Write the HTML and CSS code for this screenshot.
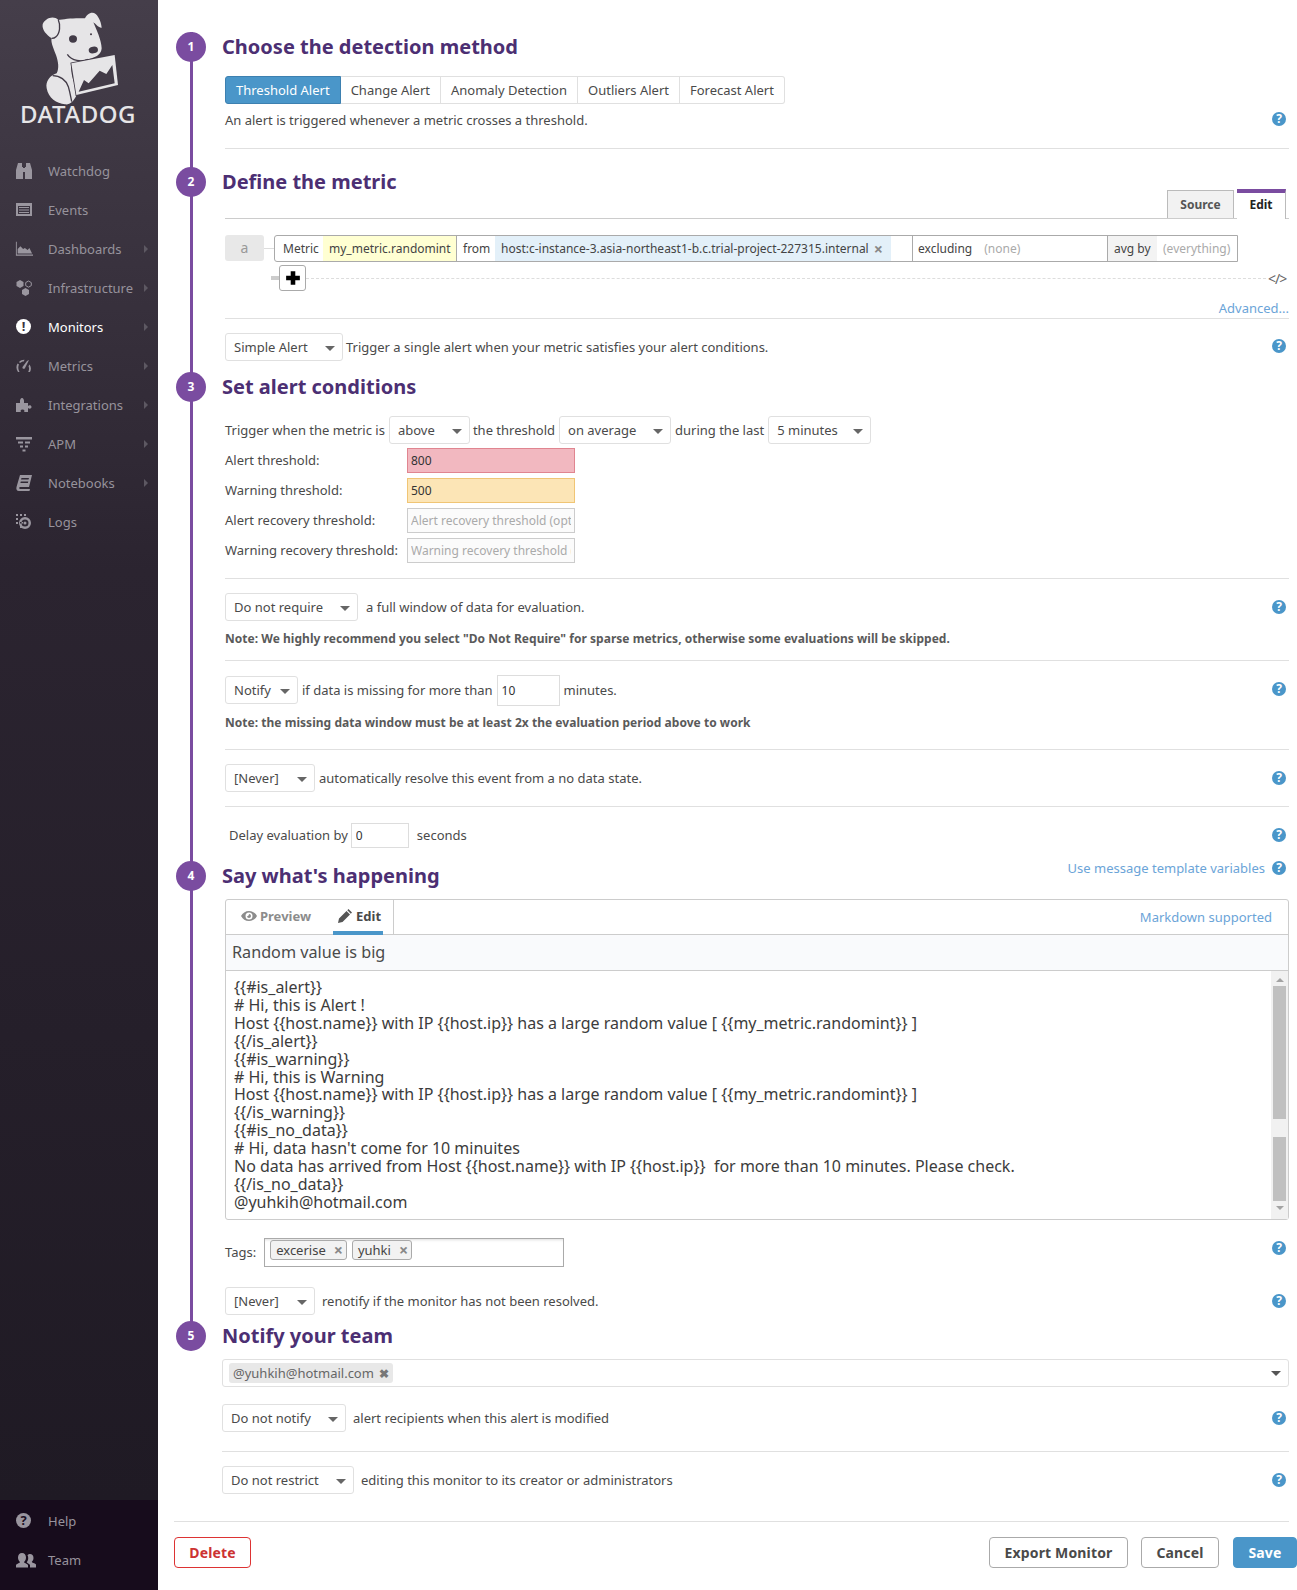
FILE: index.html
```html
<!DOCTYPE html>
<html lang="en">
<head>
    <meta charset="UTF-8">
    <title>Edit Monitor | Datadog</title>
    <link rel="stylesheet" href="styles.css">
</head>
<body>
<div class="page">
    <aside class="sidebar">
        <div class="logo">
            <svg class="logo-dog" viewBox="0 0 300 300">
                <path class="dog" d="M38 58C45 40 70 30 85 45c15-3 50-7 80-5 5-12 20-22 32-13 11 10 17 28 18 41-7 2-17-10-25-16 10 23 24 53 25 78-1 18-15 25-30 30l-61 15c-2 20 1 40 11 65l5 30c-10 20-20 30-35 28-25-3-50-18-55-48-4-22 10-38 30-45 8-15 5-35-2-55-10-25-16-40-13-50C50 90 35 75 38 58z"/>
                <path class="dog-mark" d="M85 45c7 15 5 40-7 50-5 5-10 5-13 5"/>
                <path class="dog-mark" d="M68 212c22 0 40 13 47 33 5 17 7 30 10 45"/>
                <path class="dog-mark" d="M112 148c13 20 43 24 63 15"/>
                <ellipse class="dog-eye" cx="129" cy="102" rx="12" ry="11"/>
                <ellipse class="dog-eye" cx="190" cy="135" rx="14" ry="10" transform="rotate(-10 190 135)"/>
                <circle class="dog-eye" cx="183" cy="88" r="3"/>
                <path class="dog dog-paper" d="M124 175l130-25 10 90-125 30z"/>
                <path class="dog-eye" d="M146 260l16-35 14 10 33-38 20 10 18-27 7 55z"/>
            </svg>
            <div class="logo-text">DATADOG</div>
        </div>
        <nav class="nav">
            <a class="nav-item">
                <svg class="nav-icon" viewBox="0 0 18 18"><path d="M3 1h4v4h1v12H1V8zM11 1h4l2 7v9h-7V5h1zM8 6h2v4H8z"/></svg>
                <span>Watchdog</span>
            </a>
            <a class="nav-item">
                <svg class="nav-icon" viewBox="0 0 18 18"><path fill-rule="evenodd" d="M1 2h16v13H1zM3 5v8h12V5zM4 6h10v1H4zM4 8.500h10v1H4zM4 11h10v1H4z"/></svg>
                <span>Events</span>
            </a>
            <a class="nav-item">
                <svg class="nav-icon" viewBox="0 0 20 18"><path d="M1 1h1v14h18v1.500H1zM3 14V9l3-3 3 3 2-1 3 2 2-2 3 6z"/></svg>
                <span>Dashboards</span><i class="nav-arrow"></i>
            </a>
            <a class="nav-item">
                <svg class="nav-icon" viewBox="0 0 18 18"><path d="M5 1l3.500 2v4L5 9 1.500 7V3zM10.500 9l3.500 2v4l-3.500 2L7 15v-4z"/><path class="nav-line" d="M13.500 2l2.800 1.600v3L13.500 8.200l-2.800-1.600v-3z"/></svg>
                <span>Infrastructure</span><i class="nav-arrow"></i>
            </a>
            <a class="nav-item nav-active">
                <span class="nav-alert">!</span>
                <span>Monitors</span><i class="nav-arrow"></i>
            </a>
            <a class="nav-item">
                <svg class="nav-icon" viewBox="0 0 18 18"><path d="M12 4l2-1-4 8c-.5 1.500-3 1-2.500-1zM3 15c-2-3-2-6-.5-8.500l1.500 1C3 9.500 3 12 4.500 15zM4 5c1.500-1.500 3.500-2.300 5.500-2.200L8.800 4.500C7.300 4.500 6 5.200 5 6zM14.500 7.500c1.800 2.500 1.800 5.200.5 7.500h-1.800c1-2 1.200-3.700.3-5.700z"/></svg>
                <span>Metrics</span><i class="nav-arrow"></i>
            </a>
            <a class="nav-item">
                <svg class="nav-icon" viewBox="0 0 18 18"><path d="M1 7h4V5c0-1 .5-3 2-3s2 2 2 3v2h4v3c1-1 3.500-1 3.500 1s-2.500 2-3.500 1v4H9c1-1 .5-2.500-1.500-2.500S5 15 6 16H1z"/></svg>
                <span>Integrations</span><i class="nav-arrow"></i>
            </a>
            <a class="nav-item">
                <svg class="nav-icon" viewBox="0 0 18 18"><path d="M1 2h16v2.500H1zM3 6.500h5v2H3zM10 6.500h5v2h-5zM5 10.500h3v2H5zM10 10.500h3v2h-3zM7.500 14.500h3v2h-3z"/></svg>
                <span>APM</span>
                <i class="nav-arrow"></i>
            </a>
            <a class="nav-item">
                <svg class="nav-icon" viewBox="0 0 18 18"><path d="M5 1h12l-3 12H5c-1 0-1 2 0 2h10l-.5 2H4c-2.500 0-3-2-2.500-4zM6.500 4L6 5.500h7.500L14 4zM5.800 7.500L5.400 9h7.500l.4-1.500z" fill-rule="evenodd"/></svg>
                <span>Notebooks</span><i class="nav-arrow"></i>
            </a>
            <a class="nav-item">
                <svg class="nav-icon" viewBox="0 0 18 18"><path d="M1 1h2v2H1zM5 1h2v2H5zM9 1h2v2H9zM1 5h2v2H1zM1 9h2v2H1zM5 13h2v2H5z"/><path fill-rule="evenodd" d="M10 4a6 6 0 1 1 0 12 6 6 0 0 1 0-12zm0 2.500a3.500 3.500 0 1 0 0 7 3.500 3.500 0 0 0 0-7zM10 8.500a1.500 1.500 0 1 1 0 3 1.500 1.500 0 0 1 0-3zM5 9h3v1.500H5z"/></svg>
                <span>Logs</span>
            </a>
        </nav>
        <div class="nav-bottom">
            <a class="nav-item">
                <span class="nav-help">?</span>
                <span>Help</span>
            </a>
            <a class="nav-item">
                <svg class="nav-icon nav-icon-team" viewBox="0 0 22 18"><path d="M7 2c2.500 0 4 2 4 4.500 0 2-1 3.500-2 4.500 0 1 3 1.500 4 3v2.500H1V14c1-1.500 4-2 4-3-1-1-2-2.500-2-4.500C3 4 4.500 2 7 2zM15 3c2 0 3.500 1.500 3.500 4 0 1.800-.8 3-1.700 3.800 0 1 3 1.200 4.200 2.700v3h-6v-2.500c-1-1.200-3-2-3.300-2.700 1-1.200 1.500-2.500 1.500-4.300 0-1-.2-2-.7-2.800C13.500 3.200 14.200 3 15 3z"/></svg>
                <span>Team</span>
            </a>
            <a class="nav-item">
                <svg class="nav-icon" viewBox="0 0 18 18"><circle cx="9" cy="6" r="4"/><path d="M2 17c0-4 3-6 7-6s7 2 7 6z"/></svg>
            </a>
        </div>
    </aside>

    <main class="content">
        <div class="rail">
            <!-- 1 -->
            <div class="step-head">
                <span class="step-num">1</span>
                <h2>Choose the detection method</h2>
            </div>
            <div class="step-body">
                <div class="type-tabs">
                    <span class="type-tab type-active">Threshold Alert</span>
                    <span class="type-tab">Change Alert</span>
                    <span class="type-tab">Anomaly Detection</span>
                    <span class="type-tab">Outliers Alert</span>
                    <span class="type-tab">Forecast Alert</span>
                </div>
                <div class="row row-desc">
                    <span>An alert is triggered whenever a metric crosses a threshold.</span>
                    <span class="help help-up">?</span>
                </div>
                <hr class="line line-a">
            </div>

            <!-- 2 -->
            <div class="step-head step-2">
                <span class="step-num">2</span>
                <h2>Define the metric</h2>
            </div>
            <div class="step-body">
                <div class="graph-tabs">
                    <span class="graph-tab">Source</span>
                    <span class="graph-tab graph-active">Edit</span>
                </div>
                <div class="query">
                    <span class="query-name">a</span>
                    <span class="query-link"></span>
                    <div class="query-box">
                        <span class="q q-label">Metric</span>
                        <span class="q q-metric">my_metric.randomint</span>
                        <span class="q q-from">from</span>
                        <span class="q q-host">host:c-instance-3.asia-northeast1-b.c.trial-project-227315.internal<b class="q-x">×</b></span>
                        <span class="q q-gap"></span>
                        <span class="q q-exclude">excluding<em>(none)</em></span>
                        <span class="q q-avg">avg by</span>
                        <span class="q q-every">(everything)</span>
                    </div>
                </div>
                <div class="query-add">
                    <span class="add-tick"></span>
                    <span class="add-btn">
                        <svg viewBox="0 0 14 14"><path d="M5 1h4v4h4v4H9v4H5V9H1V5h4z"/></svg>
                    </span>
                    <span class="add-dash"></span>
                    <span class="code-toggle">&lt;/&gt;</span>
                </div>
                <div class="advanced"><a class="link">Advanced...</a></div>
                <hr class="line">
                <div class="row row-simple">
                    <span class="select sel-simple">Simple Alert</span>
                    <span class="text-tight">Trigger a single alert when your metric satisfies your alert conditions.</span>
                    <span class="help help-up">?</span>
                </div>
            </div>

            <!-- 3 -->
            <div class="step-head step-3">
                <span class="step-num">3</span>
                <h2>Set alert conditions</h2>
            </div>
            <div class="step-body">
                <div class="row row-trigger">
                    <span>Trigger when the metric is</span>
                    <span class="select sel-above">above</span>
                    <span class="text-tight">the threshold</span>
                    <span class="select sel-average">on average</span>
                    <span>during the last</span>
                    <span class="select sel-minutes">5 minutes</span>
                </div>
                <div class="thresholds">
                    <label>Alert threshold:</label>
                    <input class="th-input th-alert" type="text" value="800">
                    <label>Warning threshold:</label>
                    <input class="th-input th-warn" type="text" value="500">
                    <label>Alert recovery threshold:</label>
                    <input class="th-input" type="text" placeholder="Alert recovery threshold (optional)">
                    <label>Warning recovery threshold:</label>
                    <input class="th-input" type="text" placeholder="Warning recovery threshold (optional)">
                </div>
                <hr class="line line-b">
                <div class="row row-window">
                    <span class="select sel-require">Do not require</span>
                    <span class="text-window">a full window of data for evaluation.</span>
                    <span class="help">?</span>
                </div>
                <div class="note">Note: We highly recommend you select "Do Not Require" for sparse metrics, otherwise some evaluations will be skipped.</div>
                <hr class="line line-c">
                <div class="row row-missing">
                    <span class="select sel-notify">Notify</span>
                    <span>if data is missing for more than</span>
                    <input class="small-input small-ten" type="text" value="10">
                    <span>minutes.</span>
                    <span class="help help-up">?</span>
                </div>
                <div class="note note-2">Note: the missing data window must be at least 2x the evaluation period above to work</div>
                <hr class="line line-d">
                <div class="row row-never">
                    <span class="select sel-never">[Never]</span>
                    <span>automatically resolve this event from a no data state.</span>
                    <span class="help">?</span>
                </div>
                <hr class="line line-e">
                <div class="row row-delay">
                    <span>Delay evaluation by</span>
                    <input class="small-input small-zero" type="text" value="0">
                    <span class="text-seconds">seconds</span>
                    <span class="help">?</span>
                </div>
            </div>

            <!-- 4 -->
            <div class="step-head step-4">
                <span class="step-num">4</span>
                <h2>Say what's happening</h2>
                <span class="head-right"><a class="link">Use message template variables</a><span class="help">?</span></span>
            </div>
            <div class="step-body">
                <div class="editor">
                    <div class="editor-tabs">
                        <span class="ed-tab">
                            <svg viewBox="0 0 16 12"><path fill-rule="evenodd" d="M8 1c3.500 0 6.500 2 8 5-1.500 3-4.500 5-8 5S1.500 9 0 6c1.500-3 4.500-5 8-5zm0 1.500a3.500 3.500 0 1 0 0 7 3.500 3.500 0 0 0 0-7zM8 4a2 2 0 1 1-2 2c.8.500 2-.5 2-2z"/></svg>
                            Preview
                        </span>
                        <span class="ed-tab ed-active">
                            <svg viewBox="0 0 14 14"><path d="M10.500 0L14 3.500 12.800 4.700 9.300 1.200zM8.500 2l3.500 3.500L4.500 13 0 14l1-4.500z"/></svg>
                            Edit
                        </span>
                        <a class="link md-link">Markdown supported</a>
                    </div>
                    <div class="subject">Random value is big</div>
                    <div class="message">
                        <pre class="message-text">{{#is_alert}}
# Hi, this is Alert !
Host {{host.name}} with IP {{host.ip}} has a large random value [ {{my_metric.randomint}} ]
{{/is_alert}}
{{#is_warning}}
# Hi, this is Warning
Host {{host.name}} with IP {{host.ip}} has a large random value [ {{my_metric.randomint}} ]
{{/is_warning}}
{{#is_no_data}}
# Hi, data hasn't come for 10 minuites
No data has arrived from Host {{host.name}} with IP {{host.ip}}  for more than 10 minutes. Please check.
{{/is_no_data}}
@yuhkih@hotmail.com</pre>
                        <div class="scrollbar">
                            <i class="sb-up"></i>
                            <span class="sb-thumb sb-thumb-a"></span>
                            <span class="sb-thumb sb-thumb-b"></span>
                            <i class="sb-down"></i>
                        </div>
                    </div>
                </div>
                <div class="row row-tags">
                    <span class="tags-label">Tags:</span>
                    <div class="tag-box">
                        <span class="tag">excerise<b>×</b></span>
                        <span class="tag">yuhki<b>×</b></span>
                    </div>
                    <span class="help help-tags">?</span>
                </div>
                <div class="row row-renotify">
                    <span class="select sel-renotify">[Never]</span>
                    <span class="text-wide">renotify if the monitor has not been resolved.</span>
                    <span class="help">?</span>
                </div>
            </div>
        </div>

        <!-- 5 -->
        <div class="step-head step-5">
            <span class="step-num">5</span>
            <h2>Notify your team</h2>
        </div>
        <div class="step-body step-body-last">
            <div class="recipients">
                <span class="recipient">@yuhkih@hotmail.com<b>✖</b></span>
                <i class="caret-dark"></i>
            </div>
            <div class="row row-modified">
                <span class="select sel-modified">Do not notify</span>
                <span class="text-wide">alert recipients when this alert is modified</span>
                <span class="help">?</span>
            </div>
            <hr class="line line-f">
            <div class="row row-restrict">
                <span class="select sel-restrict">Do not restrict</span>
                <span class="text-wide">editing this monitor to its creator or administrators</span>
                <span class="help">?</span>
            </div>
        </div>

        <hr class="line line-foot">
        <div class="actions">
            <button class="btn btn-delete">Delete</button>
            <span class="actions-gap"></span>
            <button class="btn btn-export">Export Monitor</button>
            <button class="btn btn-cancel">Cancel</button>
            <button class="btn btn-save">Save</button>
        </div>
    </main>
</div>
</body>
</html>
```

FILE: styles.css
```css
* {
    box-sizing: border-box;
}
html, body {
    margin: 0;
    padding: 0;
    background: #fff;
}
body {
    font-family: "Noto Sans", "Open Sans", sans-serif;
    font-size: 13px;
    color: #4a4a4a;
    overflow: hidden;
}
.page {
    display: flex;
    width: 1297px;
    height: 1590px;
    overflow: hidden;
}

/* sidebar */
.sidebar {
    width: 158px;
    flex: none;
    display: flex;
    flex-direction: column;
    background: linear-gradient(to bottom, #453e4a 0, #2b2430 570px, #1f1a24 1500px);
    color: #97939c;
}
.logo {
    height: 151px;
}
.logo-dog {
    display: block;
    width: 100px;
    height: 100px;
    margin: 5px 0 0 30px;
}
.dog {
    fill: #e6e5e7;
}
.dog-paper {
    stroke: #423b47;
    stroke-width: 5;
    paint-order: stroke;
}
.dog-eye {
    fill: #423b47;
}
.dog-mark {
    fill: none;
    stroke: #423b47;
    stroke-width: 4;
}
.logo-text {
    margin-top: -3px;
    padding-left: 20px;
    font-size: 24px;
    font-weight: 500;
    line-height: 24px;
    color: #e6e5e7;
    letter-spacing: 0.5px;
}
.nav-item {
    display: flex;
    align-items: center;
    height: 39px;
    padding-left: 15px;
    position: relative;
}
.nav-icon {
    width: 18px;
    height: 18px;
    margin-right: 15px;
    fill: #9a969f;
    flex: none;
}
.nav-icon-team {
    width: 22px;
    margin-right: 11px;
}
.nav-line {
    fill: none;
    stroke: #9a969f;
    stroke-width: 1;
}
.nav-arrow {
    position: absolute;
    left: 144px;
    top: 16px;
    border-left: 4px solid #5d5862;
    border-top: 4px solid transparent;
    border-bottom: 4px solid transparent;
}
.nav-active {
    color: #fff;
}
.nav-alert, .nav-help {
    width: 15px;
    height: 15px;
    margin: 0 17px 0 1px;
    border-radius: 50%;
    background: #fff;
    color: #3a3340;
    font-size: 13px;
    font-weight: 700;
    line-height: 15px;
    text-align: center;
    flex: none;
}
.nav-help {
    background: #9a969f;
    color: #1a0f1f;
}
.nav-bottom {
    margin-top: auto;
    height: 90px;
    padding-top: 1px;
    background: #170c1c;
    overflow: hidden;
}

/* main column */
.content {
    flex: 1;
    min-width: 0;
    padding: 32px 8px 0 16px;
}
.rail {
    position: relative;
}
.rail::before {
    content: "";
    position: absolute;
    left: 16px;
    top: 0;
    bottom: -8px;
    width: 3px;
    background: #7a4ca0;
}
.step-head {
    display: flex;
    align-items: center;
    height: 30px;
    position: relative;
}
.step-num {
    width: 30px;
    height: 30px;
    margin: 0 16px 0 2px;
    border-radius: 50%;
    background: #7a4ca0;
    color: #fff;
    font-size: 12px;
    font-weight: 700;
    line-height: 30px;
    text-align: center;
    flex: none;
}
h2 {
    margin: 0;
    padding-bottom: 2px;
    font-size: 20px;
    font-weight: 700;
    color: #4c2f73;
}
.step-2 {
    margin-top: 18px;
}
.step-3 {
    margin-top: 11px;
}
.step-4 {
    margin-top: 12px;
}
.step-5 {
    margin-top: 6px;
}
.step-body {
    padding-left: 51px;
}
.step-body-last {
    padding-left: 48px;
}
.head-right {
    margin-left: auto;
    display: flex;
    align-items: center;
    gap: 7px;
    margin-top: -16px;
}
.line {
    border: 0;
    height: 1px;
    margin: 0;
    background: #e0e0e0;
}
.line-a {
    margin-top: 18px;
}
.line-b {
    margin-top: 15px;
}
.line-c {
    margin-top: 12px;
}
.line-d {
    margin-top: 17px;
}
.line-e {
    margin-top: 14px;
}
.line-f {
    margin-top: 19px;
}
.line-foot {
    margin-top: 27px;
}
.link {
    color: #6ba4d8;
}
.row {
    display: flex;
    align-items: center;
    gap: 4px;
    height: 28px;
}
.help {
    width: 14px;
    height: 14px;
    margin-left: auto;
    margin-right: 3px;
    border-radius: 50%;
    background: #4a96c9;
    color: #fff;
    font-size: 12px;
    font-weight: 700;
    line-height: 14px;
    text-align: center;
    flex: none;
}
.help-up {
    margin-top: -2px;
}
.help-tags {
    margin-top: -10px;
}
.head-right .help {
    margin-left: 0;
}

/* detection method */
.type-tabs {
    display: flex;
    height: 28px;
    margin-top: 14px;
}
.type-tab {
    display: flex;
    align-items: center;
    justify-content: center;
    padding: 0 10px;
    border: 1px solid #e0e0e0;
    border-left: 0;
    color: #4a4a4a;
}
.type-tab:last-child {
    border-radius: 0 3px 3px 0;
}
.type-active {
    color: #fff;
    background: #4a96c9;
    border: 1px solid #3d80b0;
    border-radius: 3px 0 0 3px;
}
.row-desc {
    height: 20px;
    margin-top: 6px;
}

/* metric */
.graph-tabs {
    display: flex;
    justify-content: flex-end;
    gap: 3px;
    height: 30px;
    margin-top: -8px;
    padding-right: 3px;
    border-bottom: 1px solid #ccc;
}
.graph-tab {
    display: flex;
    align-items: center;
    justify-content: center;
    width: 67px;
    height: 28px;
    margin-top: 1px;
    background: #f2f2f2;
    border: 1px solid #bbb;
    border-bottom: 0;
    font-size: 12px;
    font-weight: 700;
    color: #555;
}
.graph-active {
    width: 49px;
    height: 30px;
    margin-top: 0;
    padding-bottom: 3px;
    background: #fff;
    border-top: 4px solid #7a4ca0;
    border-left: 0;
    color: #222;
}
.query {
    display: flex;
    align-items: flex-start;
    margin-top: 16px;
    font-size: 12px;
}
.query-name {
    width: 39px;
    height: 26px;
    background: #e8e8e8;
    border-radius: 3px;
    color: #999;
    font-size: 14px;
    line-height: 26px;
    text-align: center;
}
.query-link {
    width: 10px;
    height: 1px;
    margin-top: 13px;
    background: #ddd;
}
.query-box {
    display: flex;
    width: 964px;
    height: 27px;
    border: 1px solid #aaa;
    border-radius: 3px 0 0 3px;
}
.q {
    display: flex;
    align-items: center;
    white-space: nowrap;
    color: #444;
}
.q-label {
    width: 48px;
    padding-left: 8px;
}
.q-metric {
    width: 134px;
    padding-left: 6px;
    background: #ffffd2;
    border-right: 1px solid #aaa;
}
.q-from {
    width: 38px;
    padding-left: 6px;
}
.q-host {
    width: 396px;
    padding-left: 6px;
    background: #e3f0f9;
    overflow: hidden;
}
.q-x {
    margin-left: 5px;
    font-size: 16px;
    font-weight: 700;
    color: #888;
}
.q-gap {
    width: 22px;
    border-right: 1px solid #aaa;
}
.q-exclude {
    width: 195px;
    padding-left: 5px;
    border-right: 1px solid #aaa;
}
.q-exclude em {
    margin-left: 12px;
    font-style: normal;
    color: #aaa;
}
.q-avg {
    width: 49px;
    padding-left: 6px;
    background: #f3f3f3;
}
.q-every {
    flex: 1;
    padding-left: 6px;
    color: #aaa;
}
.query-add {
    display: flex;
    align-items: center;
    height: 26px;
    margin: 3px 0 0 46px;
}
.add-tick {
    width: 8px;
    height: 4px;
    background: #ccc;
}
.add-btn {
    display: flex;
    align-items: center;
    justify-content: center;
    width: 27px;
    height: 26px;
    border: 1px solid #aaa;
    border-radius: 3px;
    background: #fff;
}
.add-btn svg {
    width: 16px;
    height: 16px;
    fill: #000;
}
.add-dash {
    flex: 1;
    border-top: 1px dashed #ddd;
}
.code-toggle {
    width: 23px;
    padding-left: 2px;
    font-size: 14px;
    letter-spacing: -1px;
    color: #666;
    white-space: nowrap;
}
.advanced {
    height: 20px;
    margin-top: 7px;
    text-align: right;
    line-height: 20px;
}
.row-simple {
    margin-top: 14px;
}

/* selects */
.select {
    display: flex;
    align-items: center;
    height: 28px;
    padding-left: 8px;
    border: 1px solid #e0e0e0;
    border-radius: 3px;
    background: #fff;
    position: relative;
    flex: none;
}
.select::after {
    content: "";
    position: absolute;
    right: 7px;
    top: 12px;
    border-top: 5px solid #666;
    border-left: 5px solid transparent;
    border-right: 5px solid transparent;
}
.caret-dark {
    margin-left: auto;
    border-top: 5px solid #555;
    border-left: 5px solid transparent;
    border-right: 5px solid transparent;
}
.sel-simple {
    width: 118px;
}
.sel-above {
    width: 81px;
}
.sel-average {
    width: 112px;
}
.sel-minutes {
    width: 103px;
}
.sel-require {
    width: 133px;
}
.sel-notify {
    width: 73px;
}
.sel-never {
    width: 90px;
}
.sel-renotify {
    width: 90px;
}
.sel-modified {
    width: 124px;
}
.sel-restrict {
    width: 132px;
}
.text-wide {
    margin-left: 3px;
}
.text-window {
    margin-left: 4px;
}
.text-tight {
    margin-left: -1px;
}

/* conditions */
.row-trigger {
    margin-top: 14px;
}
.thresholds {
    display: grid;
    grid-template-columns: 182px 168px;
    row-gap: 5px;
    align-items: center;
    margin-top: 4px;
}
.thresholds label {
    padding-bottom: 2px;
}
.th-input {
    width: 168px;
    height: 25px;
    padding: 0 3px;
    border: 1px solid #ccc;
    background: #fbfbfb;
    font: 12px "Noto Sans", sans-serif;
    color: #333;
}
.th-input::placeholder {
    color: #aaa;
    opacity: 1;
}
.th-alert {
    background: #f2b8c0;
    border-color: #e08590;
}
.th-warn {
    background: #fce5b6;
    border-color: #f0c575;
}
.row-window {
    margin-top: 14px;
}
.note {
    height: 18px;
    margin-top: 9px;
    font-size: 12px;
    font-weight: 700;
    line-height: 18px;
    letter-spacing: 0.03px;
    color: #5a5a5a;
    white-space: nowrap;
}
.note-2 {
    margin-top: 10px;
}
.row-missing {
    margin-top: 15px;
}
.small-input {
    height: 25px;
    padding: 0 4px;
    border: 1px solid #ddd;
    background: #fff;
    font: 12px "Noto Sans", sans-serif;
    color: #333;
}
.small-ten {
    width: 63px;
    height: 31px;
}
.small-zero {
    width: 58px;
    margin-left: -1px;
}
.row-never {
    margin-top: 14px;
}
.row-delay {
    margin-top: 14px;
    padding-left: 4px;
}
.text-seconds {
    margin-left: 4px;
}

/* message editor */
.editor {
    margin-top: 8px;
    height: 321px;
    border: 1px solid #ccc;
    border-radius: 3px;
    display: flex;
    flex-direction: column;
}
.editor-tabs {
    display: flex;
    align-items: stretch;
    height: 35px;
    flex: none;
    border-bottom: 1px solid #ccc;
    font-weight: 700;
    color: #8c8c8c;
}
.ed-tab {
    display: flex;
    align-items: center;
    gap: 3px;
    padding: 0 0 3px 15px;
    width: 82px;
}
.ed-tab svg {
    width: 16px;
    height: 12px;
    fill: #8c8c8c;
    flex: none;
}
.ed-active {
    width: 86px;
    padding-left: 30px;
    gap: 4px;
    color: #4a4a4a;
    border-right: 1px solid #ccc;
    position: relative;
}
.ed-active svg {
    width: 14px;
    height: 14px;
    fill: #555;
}
.ed-active::after {
    content: "";
    position: absolute;
    left: 25px;
    right: 10px;
    bottom: -1px;
    height: 4px;
    background: #4a96c9;
}
.md-link {
    margin-left: auto;
    padding-right: 16px;
    font-weight: 400;
    line-height: 35px;
}
.subject {
    height: 36px;
    flex: none;
    padding-left: 6px;
    background: #f9fafc;
    border-bottom: 1px solid #ccc;
    font-size: 16.2px;
    line-height: 35px;
}
.message {
    flex: 1;
    display: flex;
    min-height: 0;
}
.message-text {
    flex: 1;
    margin: 0;
    padding: 8px 0 0 8px;
    font: 16px/17.9px "Noto Sans", sans-serif;
    color: #3c3c3c;
    overflow: hidden;
}
.scrollbar {
    width: 17px;
    flex: none;
    display: flex;
    flex-direction: column;
    align-items: center;
    background: #f1f1f1;
    padding-top: 7px;
}
.sb-thumb {
    width: 13px;
    background: #c0c0c0;
}
.sb-thumb-a {
    height: 133px;
    margin-top: 4px;
}
.sb-thumb-b {
    height: 64px;
    margin-top: 18px;
}
.sb-up {
    border-bottom: 4px solid #a3a3a3;
    border-left: 4px solid transparent;
    border-right: 4px solid transparent;
}
.sb-down {
    margin-top: 5px;
    border-top: 4px solid #a3a3a3;
    border-left: 4px solid transparent;
    border-right: 4px solid transparent;
}
.row-tags {
    height: 30px;
    margin-top: 18px;
    gap: 8px;
}
.tags-label {
    padding-bottom: 3px;
}
.tag-box {
    display: flex;
    align-self: flex-start;
    gap: 5px;
    width: 300px;
    height: 29px;
    padding: 1px 5px;
    border: 1px solid #aaa;
    box-shadow: inset 0 3px 3px -2px #ddd;
}
.tag {
    display: flex;
    align-items: center;
    justify-content: space-between;
    height: 20px;
    padding: 0 3px 0 5px;
    gap: 8px;
    background: #f2f2f2;
    border: 1px solid #aaa;
    border-radius: 3px;
    color: #444;
}
.tag b {
    font-size: 16px;
    font-weight: 700;
    color: #888;
}
.row-renotify {
    margin-top: 19px;
}

/* notify */
.recipients {
    display: flex;
    align-items: center;
    height: 28px;
    margin-top: 8px;
    padding: 0 7px 0 6px;
    border: 1px solid #e0e0e0;
    border-radius: 3px;
}
.recipient {
    display: flex;
    align-items: center;
    gap: 5px;
    height: 20px;
    padding: 0 4px;
    background: #e8e8e8;
    border-radius: 3px;
    color: #666;
}
.recipient b {
    font-size: 12px;
    color: #777;
}
.row-modified {
    margin-top: 17px;
}
.row-restrict {
    margin-top: 14px;
}

/* footer buttons */
.actions {
    display: flex;
    align-items: center;
    height: 31px;
    margin: 15px -8px 0 0;
}
.actions-gap {
    flex: 1;
}
.btn {
    height: 31px;
    padding: 0;
    border: 1px solid #aaa;
    border-radius: 4px;
    background: #fff;
    font: 700 14px "Noto Sans", sans-serif;
    letter-spacing: 0.15px;
    color: #4a4a4a;
}
.btn-delete {
    width: 77px;
    border-color: #d33;
    color: #c33;
}
.btn-export {
    width: 139px;
}
.btn-cancel {
    width: 78px;
    margin-left: 13px;
}
.btn-save {
    width: 64px;
    margin-left: 14px;
    background: #4a96c9;
    border-color: #4a96c9;
    color: #fff;
}
```
